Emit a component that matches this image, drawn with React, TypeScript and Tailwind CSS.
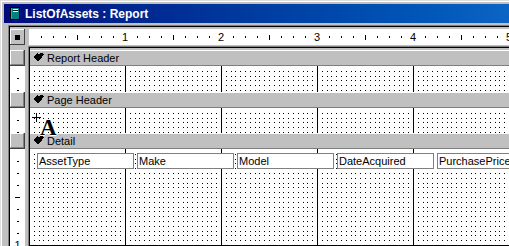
import React from "react";

const fields = ["AssetType", "Make", "Model", "DateAcquired", "PurchasePrice"];

// little book icon in the title bar
function ReportIcon() {
  return (
    <svg width="16" height="16" viewBox="0 0 16 16" shapeRendering="crispEdges">
      <rect x="4.5" y="1.5" width="9" height="12" fill="#008080" stroke="#000" />
      <rect x="5" y="2" width="1" height="11" fill="#00c0c0" />
      <rect x="7" y="3" width="5" height="3" fill="#fff" />
      <rect x="7" y="4" width="5" height="1" fill="#000" />
    </svg>
  );
}

function SectionGlyph() {
  return (
    <svg width="11" height="10" viewBox="0 0 11 10" shapeRendering="crispEdges">
      <polygon points="0,4 4,0 6,1 8,0 11,1 9,4 5,9 3,7" fill="#000" />
    </svg>
  );
}

function RulerH() {
  const ticks = Array.from({ length: 40 }, (_, i) => i + 1);
  return (
    <div className="flex-1 h-[16px] bg-white flex items-center overflow-hidden">
      <div className="w-[6px] shrink-0" />
      {ticks.map((k) => (
        <div key={k} className="w-[12px] shrink-0 flex justify-center items-center">
          {k % 8 === 0 ? (
            <span className="text-[11px] leading-none">{k / 8}</span>
          ) : k % 4 === 0 ? (
            <div className="w-px h-[5px] bg-black" />
          ) : (
            <div className="w-px h-[2px] bg-black" />
          )}
        </div>
      ))}
    </div>
  );
}

function RulerV({ count }: { count: number }) {
  const ticks = Array.from({ length: count }, (_, i) => i + 1);
  return (
    <div className="w-[15px] shrink-0 bg-white flex flex-col items-center overflow-hidden">
      <div className="h-[6px] shrink-0" />
      {ticks.map((k) => (
        <div key={k} className="h-[12px] shrink-0 flex items-center justify-center">
          {k % 8 === 0 ? (
            <span className="text-[11px] leading-none">{k / 8}</span>
          ) : k % 4 === 0 ? (
            <div className="w-[5px] h-px bg-black" />
          ) : (
            <div className="w-[2px] h-px bg-black" />
          )}
        </div>
      ))}
    </div>
  );
}

// dotted design grid, 20 dots per inch, solid line every inch
function Grid({ id, h }: { id: string; h: number }) {
  const steps = [0, 5, 10, 14, 19];
  return (
    <svg className="absolute left-0 top-0" width="600" height={h} shapeRendering="crispEdges">
      <defs>
        <pattern id={id} x="-1" y="0" width="24" height="24" patternUnits="userSpaceOnUse">
          {steps.flatMap((y) =>
            steps.map((x) => <rect key={`${x}-${y}`} x={x} y={y} width="1" height="1" fill="#000" />)
          )}
        </pattern>
      </defs>
      <rect x="0" y="1" width="600" height={h} fill={`url(#${id})`} />
      {[95, 191, 287, 383, 479].map((x) => (
        <rect key={x} x={x} y="0" width="1" height={h} fill="#000" />
      ))}
      {h > 96 && <rect x="0" y="96" width="600" height="1" fill="#000" />}
    </svg>
  );
}

function Separator() {
  return <div className="w-[4px] shrink-0 bg-[#c0c0c0] border-r border-[#808080]" />;
}

function SectionBar({ label }: { label: string }) {
  return (
    <div className="flex h-[16px] shrink-0">
      <div className="w-[15px] shrink-0 border-r border-b border-[#404040]">
        <div className="h-full bg-[#c0c0c0] border-t border-l border-white border-r border-b border-r-[#808080] border-b-[#808080]" />
      </div>
      <Separator />
      <div className="flex-1 border-l border-black">
        <div className="h-full bg-[#c0c0c0] border-t border-white border-b border-b-[#808080] flex items-center pl-[3px] gap-[3px]">
          <SectionGlyph />
          <span className="text-[11px] leading-none whitespace-nowrap">{label}</span>
        </div>
      </div>
    </div>
  );
}

function SectionBody({ id, h, children }: { id: string; h: number; children?: React.ReactNode }) {
  return (
    <div className="flex shrink-0" style={{ height: h }}>
      <RulerV count={Math.floor((h - 6) / 12) + 1} />
      <Separator />
      <div className="flex-1 border-l border-black bg-white relative overflow-hidden">
        <Grid id={id} h={h} />
        {children}
      </div>
    </div>
  );
}

function TitleBar() {
  return (
    <div className="h-[19px] shrink-0 bg-linear-to-r from-[#000a7e] to-[#0c64c4] flex items-center pl-[2px] gap-[3px]">
      <ReportIcon />
      <span className="text-white font-bold text-[12px] leading-none whitespace-nowrap">ListOfAssets : Report</span>
    </div>
  );
}

export default function App() {
  return (
    <div className="w-[509px] h-[246px] overflow-hidden bg-[#c0c0c0] relative font-['Liberation_Sans',Arial,sans-serif] text-black">
      <div className="h-full border-l border-t border-[#dfdfdf]">
        <div className="h-full border-l border-t border-white pl-[2px] pt-[2px] flex flex-col">
          <TitleBar />
          <div className="mt-[2px] ml-[4px] flex-1 border-l border-t border-[#808080]">
            <div className="h-full border-l border-t border-black flex flex-col">
              {/* ruler row */}
              <div className="flex mt-[2px] h-[16px] shrink-0">
                <div className="w-[15px] shrink-0 border-r border-b border-[#404040]">
                  <div className="h-full bg-[#c0c0c0] border-t border-l border-white flex items-center justify-center">
                    <div className="w-[5px] h-[5px] bg-black" />
                  </div>
                </div>
                <div className="w-[4px] shrink-0" />
                <RulerH />
              </div>
              {/* sunken edge above the sections */}
              <div className="flex h-[5px] shrink-0">
                <div className="w-[18px] shrink-0" />
                <div className="flex-1 mt-px border-t border-l border-[#808080]">
                  <div className="h-full border-t border-l border-black" />
                </div>
              </div>
              <SectionBar label="Report Header" />
              <SectionBody id="g1" h={26} />
              <SectionBar label="Page Header" />
              <SectionBody id="g2" h={25} />
              <SectionBar label="Detail" />
              <SectionBody id="g3" h={100}>
                <div className="relative flex gap-[3px] pl-[7px] pt-[4px]">
                  {fields.map((f) => (
                    <div
                      key={f}
                      className="w-[97px] h-[16px] shrink-0 border border-[#808080] bg-white pl-px text-[11px] leading-[14px] whitespace-nowrap overflow-hidden"
                    >
                      {f}
                    </div>
                  ))}
                </div>
              </SectionBody>
            </div>
          </div>
        </div>
      </div>

      {/* label tool cursor */}
      <div className="absolute left-[32px] top-[117px] w-[9px] h-px bg-black" />
      <div className="absolute left-[36px] top-[113px] w-px h-[9px] bg-black" />
      <span className="absolute left-[40px] top-[116px] font-['Liberation_Serif',serif] font-bold text-[23px] leading-none [text-shadow:1px_0_#fff,-1px_0_#fff,0_1px_#fff,0_-1px_#fff]">
        A
      </span>
    </div>
  );
}
